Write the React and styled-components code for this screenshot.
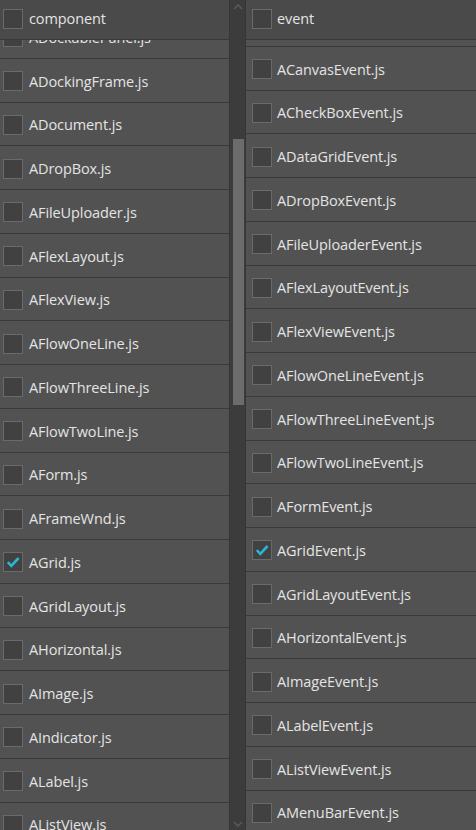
import React, { useLayoutEffect, useRef } from "react";
import styled, { createGlobalStyle } from "styled-components";

const GlobalStyle = createGlobalStyle`
  html, body, #root {
    margin: 0;
    padding: 0;
    height: 100%;
  }
  body {
    background-color: #3c3c3c;
    font-family: "Open Sans", "Noto Sans", sans-serif;
    overflow: hidden;
  }
`;

const Page = styled.div`
  display: flex;
  width: 100vw;
  height: 100vh;
  background-color: #3c3c3c;
`;

const Panel = styled.div`
  display: flex;
  flex-direction: column;
  width: ${(p) => (p.$width ? `${p.$width}px` : "auto")};
  flex: ${(p) => (p.$width ? "none" : "1")};
  min-width: 0;
  height: 100%;
  background-color: #525252;
  border-left: ${(p) => (p.$edge ? "1px solid #363636" : "none")};
`;

const Header = styled.div`
  display: flex;
  align-items: center;
  gap: ${(p) => p.$gap}px;
  flex: none;
  height: 40px;
  box-sizing: border-box;
  padding: 0 0 2px ${(p) => p.$inset}px;
  background-color: #4a4a4a;
  border-bottom: 1px solid #383838;
`;

const Viewport = styled.div`
  flex: 1;
  min-height: 0;
  overflow: hidden;
`;

const Row = styled.div`
  display: flex;
  align-items: center;
  gap: ${(p) => p.$gap}px;
  height: 43.75px;
  box-sizing: border-box;
  padding: 2px 0 0 ${(p) => p.$inset}px;
  border-bottom: 1px solid #3a3a3a;
`;

const Box = styled.span`
  display: flex;
  align-items: center;
  justify-content: center;
  flex: none;
  width: 20px;
  height: 20px;
  box-sizing: border-box;
  background-color: #414141;
  border: 1px solid #6a6a6a;
`;

const Label = styled.span`
  color: #e4e4e4;
  font-size: 14.5px;
  white-space: nowrap;
  letter-spacing: -0.1px;
`;

const ScrollTrack = styled.div`
  display: flex;
  flex-direction: column;
  align-items: center;
  flex: none;
  width: 16px;
  height: 100%;
  box-sizing: border-box;
  background-color: #3c3c3c;
  border-left: 1px solid #373737;
`;

const Arrow = styled.div`
  display: flex;
  justify-content: center;
  flex: none;
  height: ${(p) => p.$h}px;
  padding-top: ${(p) => p.$pt}px;
  box-sizing: border-box;
`;

const Thumb = styled.div`
  flex: none;
  width: 11px;
  height: ${(p) => p.$h}px;
  margin-top: ${(p) => p.$top}px;
  margin-left: 1px;
  background-color: #6c6c6c;
`;

const Filler = styled.div`
  flex: 1;
`;

const Check = () => (
  <svg width="14" height="12" viewBox="0 0 14 12">
    <polyline
      points="1.8,6.2 5.3,9.8 12.6,2"
      fill="none"
      stroke="#2ab4d6"
      strokeWidth="2.6"
    />
  </svg>
);

const Chevron = ({ up }) => (
  <svg width="10" height="6" viewBox="0 0 10 6">
    <polyline
      points={up ? "1,5 5,1 9,5" : "1,1 5,5 9,1"}
      fill="none"
      stroke="#5c5c5c"
      strokeWidth="1.4"
    />
  </svg>
);

const componentFiles = [
  "ADockablePanel.js",
  "ADockingFrame.js",
  "ADocument.js",
  "ADropBox.js",
  "AFileUploader.js",
  "AFlexLayout.js",
  "AFlexView.js",
  "AFlowOneLine.js",
  "AFlowThreeLine.js",
  "AFlowTwoLine.js",
  "AForm.js",
  "AFrameWnd.js",
  "AGrid.js",
  "AGridLayout.js",
  "AHorizontal.js",
  "AImage.js",
  "AIndicator.js",
  "ALabel.js",
  "AListView.js",
  "AMenuBar.js",
  "APanel.js",
];

const eventFiles = [
  "AButtonEvent.js",
  "ACanvasEvent.js",
  "ACheckBoxEvent.js",
  "ADataGridEvent.js",
  "ADropBoxEvent.js",
  "AFileUploaderEvent.js",
  "AFlexLayoutEvent.js",
  "AFlexViewEvent.js",
  "AFlowOneLineEvent.js",
  "AFlowThreeLineEvent.js",
  "AFlowTwoLineEvent.js",
  "AFormEvent.js",
  "AGridEvent.js",
  "AGridLayoutEvent.js",
  "AHorizontalEvent.js",
  "AImageEvent.js",
  "ALabelEvent.js",
  "AListViewEvent.js",
  "AMenuBarEvent.js",
  "APanelEvent.js",
];

const FileList = ({ title, files, checked, inset, gap, scroll, width, edge }) => {
  const ref = useRef(null);

  useLayoutEffect(() => {
    if (ref.current) ref.current.scrollTop = scroll;
  }, [scroll]);

  return (
    <Panel $width={width} $edge={edge}>
      <Header $inset={inset} $gap={gap}>
        <Box />
        <Label>{title}</Label>
      </Header>
      <Viewport ref={ref}>
        {files.map((name) => (
          <Row key={name} $inset={inset} $gap={gap}>
            <Box>{checked.includes(name) && <Check />}</Box>
            <Label>{name}</Label>
          </Row>
        ))}
      </Viewport>
    </Panel>
  );
};

const App = () => {
  return (
    <>
      <GlobalStyle />
      <Page>
        <FileList
          title="component"
          files={componentFiles}
          checked={["AGrid.js"]}
          inset={3}
          gap={6}
          scroll={25}
          width={229}
        />
        <ScrollTrack>
          <Arrow $h={10} $pt={4}>
            <Chevron up />
          </Arrow>
          <Thumb $top={129} $h={266} />
          <Filler />
          <Arrow $h={10} $pt={1}>
            <Chevron />
          </Arrow>
        </ScrollTrack>
        <FileList
          title="event"
          files={eventFiles}
          checked={["AGridEvent.js"]}
          inset={6}
          gap={5}
          scroll={37}
          edge
        />
      </Page>
    </>
  );
};

export default App;
